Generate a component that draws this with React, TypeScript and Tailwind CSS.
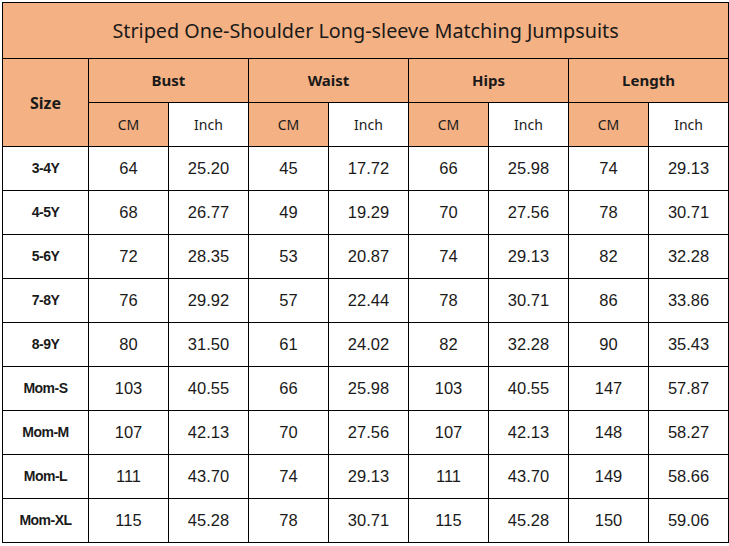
const rows = [
  ['3-4Y', '64', '25.20', '45', '17.72', '66', '25.98', '74', '29.13'],
  ['4-5Y', '68', '26.77', '49', '19.29', '70', '27.56', '78', '30.71'],
  ['5-6Y', '72', '28.35', '53', '20.87', '74', '29.13', '82', '32.28'],
  ['7-8Y', '76', '29.92', '57', '22.44', '78', '30.71', '86', '33.86'],
  ['8-9Y', '80', '31.50', '61', '24.02', '82', '32.28', '90', '35.43'],
  ['Mom-S', '103', '40.55', '66', '25.98', '103', '40.55', '147', '57.87'],
  ['Mom-M', '107', '42.13', '70', '27.56', '107', '42.13', '148', '58.27'],
  ['Mom-L', '111', '43.70', '74', '29.13', '111', '43.70', '149', '58.66'],
  ['Mom-XL', '115', '45.28', '78', '30.71', '115', '45.28', '150', '59.06'],
];

const groups = ['Bust', 'Waist', 'Hips', 'Length'];

export default function App() {
  return (
    <div className="w-[729px] h-[546px] bg-white pl-[2px] pt-[2px] text-[#1a1a1a]">
      <table className="table-fixed border-collapse w-[727px]">
        <colgroup>
          <col className="w-[86px]" />
          {Array.from({ length: 8 }).map((_, i) => (
            <col key={i} className="w-[80px]" />
          ))}
        </colgroup>
        <tbody>
          <tr className="h-[56px]">
            <td
              colSpan={9}
              className="border border-black bg-[#f4b183] text-center text-[19.8px] font-['Noto_Sans',sans-serif]"
            >
              Striped One-Shoulder Long-sleeve Matching Jumpsuits
            </td>
          </tr>
          <tr className="h-[44px]">
            <td
              rowSpan={2}
              className="border border-black bg-[#f4b183] text-center text-[16px] font-bold font-['Noto_Sans',sans-serif]"
            >
              Size
            </td>
            {groups.map((g) => (
              <td
                key={g}
                colSpan={2}
                className="border border-black bg-[#f4b183] text-center text-[15px] font-bold font-['Noto_Sans',sans-serif]"
              >
                {g}
              </td>
            ))}
          </tr>
          <tr className="h-[44px]">
            {groups.map((g) => [
              <td
                key={g + 'cm'}
                className="border border-black bg-[#f4b183] text-center text-[14px] font-['Noto_Sans',sans-serif]"
              >
                CM
              </td>,
              <td
                key={g + 'in'}
                className="border border-black bg-white text-center text-[14px] font-['Noto_Sans',sans-serif]"
              >
                Inch
              </td>,
            ])}
          </tr>
          {rows.map((r) => (
            <tr key={r[0]} className="h-[44px]">
              <td className="border border-black text-center text-[14px] font-bold tracking-[-0.5px] font-['Liberation_Sans',Arial,sans-serif]">
                {r[0]}
              </td>
              {r.slice(1).map((v, i) => (
                <td
                  key={i}
                  className="border border-black text-center text-[16.5px] font-['Liberation_Sans',Arial,sans-serif]"
                >
                  {v}
                </td>
              ))}
            </tr>
          ))}
        </tbody>
      </table>
    </div>
  );
}
